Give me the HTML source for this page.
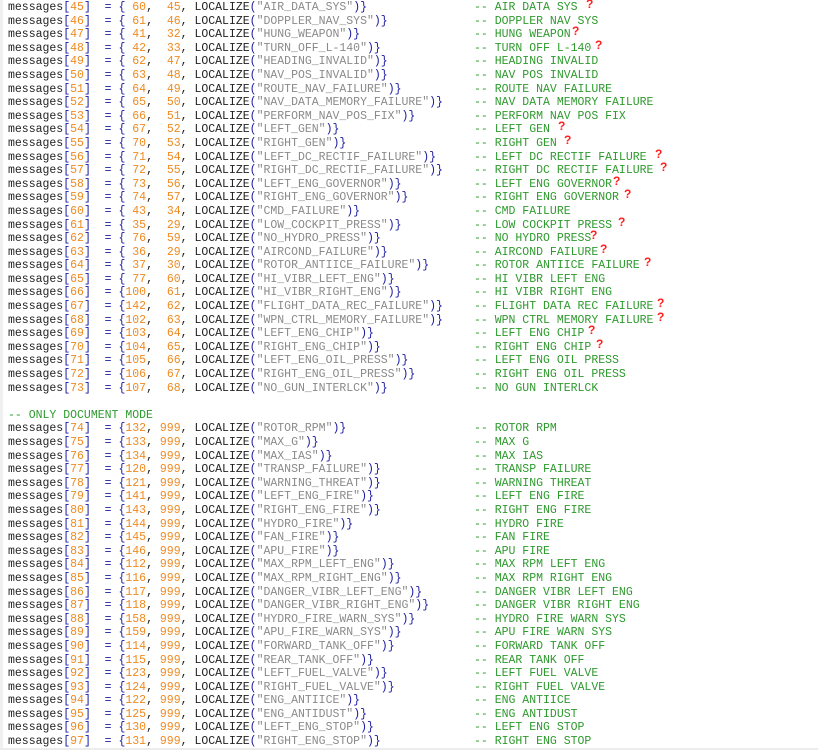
<!DOCTYPE html>
<html><head><meta charset="utf-8"><style>
body{margin:0;background:#fff;width:818px;height:750px;overflow:hidden;position:relative}
#lb{position:absolute;left:0;top:0;width:3px;height:750px;background:#f0f0f0}
#bb{position:absolute;left:0;top:748px;width:818px;height:2px;background:#ececec}
#w{position:absolute;left:8px;top:1px;font-family:"Liberation Mono",monospace;font-size:11.5px;color:#222}
.l{position:relative;height:13.6px;line-height:13.6px;white-space:pre}
b{font-weight:normal;color:#222}
i{font-style:normal;color:#1a1aa0}
o{color:#f08a20}
s{text-decoration:none;color:#8a8a8a}
c{position:absolute;left:466px;top:0;color:#2e9a2e}
q{quotes:none;position:absolute;top:-3px;color:#ff2020;font-family:"Liberation Sans",sans-serif;font-weight:bold;font-size:12px}
q::before,q::after{content:none}
</style></head><body><div id="lb"></div><div id="bb"></div><div id="w"><div class=l><b>messages</b><i>[</i><o>45</o><i>]</i>  <i>= {</i> <o>60</o>,  <o>45</o>, <b>LOCALIZE</b><i>(</i><s>"AIR_DATA_SYS"</s><i>)}</i><c>-- AIR DATA SYS</c><q style="left:578px">?</q></div><div class=l><b>messages</b><i>[</i><o>46</o><i>]</i>  <i>= {</i> <o>61</o>,  <o>46</o>, <b>LOCALIZE</b><i>(</i><s>"DOPPLER_NAV_SYS"</s><i>)}</i><c>-- DOPPLER NAV SYS</c></div><div class=l><b>messages</b><i>[</i><o>47</o><i>]</i>  <i>= {</i> <o>41</o>,  <o>32</o>, <b>LOCALIZE</b><i>(</i><s>"HUNG_WEAPON"</s><i>)}</i><c>-- HUNG WEAPON</c><q style="left:564px">?</q></div><div class=l><b>messages</b><i>[</i><o>48</o><i>]</i>  <i>= {</i> <o>42</o>,  <o>33</o>, <b>LOCALIZE</b><i>(</i><s>"TURN_OFF_L-140"</s><i>)}</i><c>-- TURN OFF L-140</c><q style="left:587px">?</q></div><div class=l><b>messages</b><i>[</i><o>49</o><i>]</i>  <i>= {</i> <o>62</o>,  <o>47</o>, <b>LOCALIZE</b><i>(</i><s>"HEADING_INVALID"</s><i>)}</i><c>-- HEADING INVALID</c></div><div class=l><b>messages</b><i>[</i><o>50</o><i>]</i>  <i>= {</i> <o>63</o>,  <o>48</o>, <b>LOCALIZE</b><i>(</i><s>"NAV_POS_INVALID"</s><i>)}</i><c>-- NAV POS INVALID</c></div><div class=l><b>messages</b><i>[</i><o>51</o><i>]</i>  <i>= {</i> <o>64</o>,  <o>49</o>, <b>LOCALIZE</b><i>(</i><s>"ROUTE_NAV_FAILURE"</s><i>)}</i><c>-- ROUTE NAV FAILURE</c></div><div class=l><b>messages</b><i>[</i><o>52</o><i>]</i>  <i>= {</i> <o>65</o>,  <o>50</o>, <b>LOCALIZE</b><i>(</i><s>"NAV_DATA_MEMORY_FAILURE"</s><i>)}</i><c>-- NAV DATA MEMORY FAILURE</c></div><div class=l><b>messages</b><i>[</i><o>53</o><i>]</i>  <i>= {</i> <o>66</o>,  <o>51</o>, <b>LOCALIZE</b><i>(</i><s>"PERFORM_NAV_POS_FIX"</s><i>)}</i><c>-- PERFORM NAV POS FIX</c></div><div class=l><b>messages</b><i>[</i><o>54</o><i>]</i>  <i>= {</i> <o>67</o>,  <o>52</o>, <b>LOCALIZE</b><i>(</i><s>"LEFT_GEN"</s><i>)}</i><c>-- LEFT GEN</c><q style="left:550px">?</q></div><div class=l><b>messages</b><i>[</i><o>55</o><i>]</i>  <i>= {</i> <o>70</o>,  <o>53</o>, <b>LOCALIZE</b><i>(</i><s>"RIGHT_GEN"</s><i>)}</i><c>-- RIGHT GEN</c><q style="left:556px">?</q></div><div class=l><b>messages</b><i>[</i><o>56</o><i>]</i>  <i>= {</i> <o>71</o>,  <o>54</o>, <b>LOCALIZE</b><i>(</i><s>"LEFT_DC_RECTIF_FAILURE"</s><i>)}</i><c>-- LEFT DC RECTIF FAILURE</c><q style="left:647px">?</q></div><div class=l><b>messages</b><i>[</i><o>57</o><i>]</i>  <i>= {</i> <o>72</o>,  <o>55</o>, <b>LOCALIZE</b><i>(</i><s>"RIGHT_DC_RECTIF_FAILURE"</s><i>)}</i><c>-- RIGHT DC RECTIF FAILURE</c><q style="left:652px">?</q></div><div class=l><b>messages</b><i>[</i><o>58</o><i>]</i>  <i>= {</i> <o>73</o>,  <o>56</o>, <b>LOCALIZE</b><i>(</i><s>"LEFT_ENG_GOVERNOR"</s><i>)}</i><c>-- LEFT ENG GOVERNOR</c><q style="left:605px">?</q></div><div class=l><b>messages</b><i>[</i><o>59</o><i>]</i>  <i>= {</i> <o>74</o>,  <o>57</o>, <b>LOCALIZE</b><i>(</i><s>"RIGHT_ENG_GOVERNOR"</s><i>)}</i><c>-- RIGHT ENG GOVERNOR</c><q style="left:616px">?</q></div><div class=l><b>messages</b><i>[</i><o>60</o><i>]</i>  <i>= {</i> <o>43</o>,  <o>34</o>, <b>LOCALIZE</b><i>(</i><s>"CMD_FAILURE"</s><i>)}</i><c>-- CMD FAILURE</c></div><div class=l><b>messages</b><i>[</i><o>61</o><i>]</i>  <i>= {</i> <o>35</o>,  <o>29</o>, <b>LOCALIZE</b><i>(</i><s>"LOW_COCKPIT_PRESS"</s><i>)}</i><c>-- LOW COCKPIT PRESS</c><q style="left:610px">?</q></div><div class=l><b>messages</b><i>[</i><o>62</o><i>]</i>  <i>= {</i> <o>76</o>,  <o>59</o>, <b>LOCALIZE</b><i>(</i><s>"NO_HYDRO_PRESS"</s><i>)}</i><c>-- NO HYDRO PRESS</c><q style="left:582px">?</q></div><div class=l><b>messages</b><i>[</i><o>63</o><i>]</i>  <i>= {</i> <o>36</o>,  <o>29</o>, <b>LOCALIZE</b><i>(</i><s>"AIRCOND_FAILURE"</s><i>)}</i><c>-- AIRCOND FAILURE</c><q style="left:592px">?</q></div><div class=l><b>messages</b><i>[</i><o>64</o><i>]</i>  <i>= {</i> <o>37</o>,  <o>30</o>, <b>LOCALIZE</b><i>(</i><s>"ROTOR_ANTIICE_FAILURE"</s><i>)}</i><c>-- ROTOR ANTIICE FAILURE</c><q style="left:636px">?</q></div><div class=l><b>messages</b><i>[</i><o>65</o><i>]</i>  <i>= {</i> <o>77</o>,  <o>60</o>, <b>LOCALIZE</b><i>(</i><s>"HI_VIBR_LEFT_ENG"</s><i>)}</i><c>-- HI VIBR LEFT ENG</c></div><div class=l><b>messages</b><i>[</i><o>66</o><i>]</i>  <i>= {</i><o>100</o>,  <o>61</o>, <b>LOCALIZE</b><i>(</i><s>"HI_VIBR_RIGHT_ENG"</s><i>)}</i><c>-- HI VIBR RIGHT ENG</c></div><div class=l><b>messages</b><i>[</i><o>67</o><i>]</i>  <i>= {</i><o>142</o>,  <o>62</o>, <b>LOCALIZE</b><i>(</i><s>"FLIGHT_DATA_REC_FAILURE"</s><i>)}</i><c>-- FLIGHT DATA REC FAILURE</c><q style="left:649px">?</q></div><div class=l><b>messages</b><i>[</i><o>68</o><i>]</i>  <i>= {</i><o>102</o>,  <o>63</o>, <b>LOCALIZE</b><i>(</i><s>"WPN_CTRL_MEMORY_FAILURE"</s><i>)}</i><c>-- WPN CTRL MEMORY FAILURE</c><q style="left:649px">?</q></div><div class=l><b>messages</b><i>[</i><o>69</o><i>]</i>  <i>= {</i><o>103</o>,  <o>64</o>, <b>LOCALIZE</b><i>(</i><s>"LEFT_ENG_CHIP"</s><i>)}</i><c>-- LEFT ENG CHIP</c><q style="left:580px">?</q></div><div class=l><b>messages</b><i>[</i><o>70</o><i>]</i>  <i>= {</i><o>104</o>,  <o>65</o>, <b>LOCALIZE</b><i>(</i><s>"RIGHT_ENG_CHIP"</s><i>)}</i><c>-- RIGHT ENG CHIP</c><q style="left:588px">?</q></div><div class=l><b>messages</b><i>[</i><o>71</o><i>]</i>  <i>= {</i><o>105</o>,  <o>66</o>, <b>LOCALIZE</b><i>(</i><s>"LEFT_ENG_OIL_PRESS"</s><i>)}</i><c>-- LEFT ENG OIL PRESS</c></div><div class=l><b>messages</b><i>[</i><o>72</o><i>]</i>  <i>= {</i><o>106</o>,  <o>67</o>, <b>LOCALIZE</b><i>(</i><s>"RIGHT_ENG_OIL_PRESS"</s><i>)}</i><c>-- RIGHT ENG OIL PRESS</c></div><div class=l><b>messages</b><i>[</i><o>73</o><i>]</i>  <i>= {</i><o>107</o>,  <o>68</o>, <b>LOCALIZE</b><i>(</i><s>"NO_GUN_INTERLCK"</s><i>)}</i><c>-- NO GUN INTERLCK</c></div><div class=l> </div><div class=l><span style="color:#2e9a2e">-- ONLY DOCUMENT MODE</span></div><div class=l><b>messages</b><i>[</i><o>74</o><i>]</i>  <i>= {</i><o>132</o>, <o>999</o>, <b>LOCALIZE</b><i>(</i><s>"ROTOR_RPM"</s><i>)}</i><c>-- ROTOR RPM</c></div><div class=l><b>messages</b><i>[</i><o>75</o><i>]</i>  <i>= {</i><o>133</o>, <o>999</o>, <b>LOCALIZE</b><i>(</i><s>"MAX_G"</s><i>)}</i><c>-- MAX G</c></div><div class=l><b>messages</b><i>[</i><o>76</o><i>]</i>  <i>= {</i><o>134</o>, <o>999</o>, <b>LOCALIZE</b><i>(</i><s>"MAX_IAS"</s><i>)}</i><c>-- MAX IAS</c></div><div class=l><b>messages</b><i>[</i><o>77</o><i>]</i>  <i>= {</i><o>120</o>, <o>999</o>, <b>LOCALIZE</b><i>(</i><s>"TRANSP_FAILURE"</s><i>)}</i><c>-- TRANSP FAILURE</c></div><div class=l><b>messages</b><i>[</i><o>78</o><i>]</i>  <i>= {</i><o>121</o>, <o>999</o>, <b>LOCALIZE</b><i>(</i><s>"WARNING_THREAT"</s><i>)}</i><c>-- WARNING THREAT</c></div><div class=l><b>messages</b><i>[</i><o>79</o><i>]</i>  <i>= {</i><o>141</o>, <o>999</o>, <b>LOCALIZE</b><i>(</i><s>"LEFT_ENG_FIRE"</s><i>)}</i><c>-- LEFT ENG FIRE</c></div><div class=l><b>messages</b><i>[</i><o>80</o><i>]</i>  <i>= {</i><o>143</o>, <o>999</o>, <b>LOCALIZE</b><i>(</i><s>"RIGHT_ENG_FIRE"</s><i>)}</i><c>-- RIGHT ENG FIRE</c></div><div class=l><b>messages</b><i>[</i><o>81</o><i>]</i>  <i>= {</i><o>144</o>, <o>999</o>, <b>LOCALIZE</b><i>(</i><s>"HYDRO_FIRE"</s><i>)}</i><c>-- HYDRO FIRE</c></div><div class=l><b>messages</b><i>[</i><o>82</o><i>]</i>  <i>= {</i><o>145</o>, <o>999</o>, <b>LOCALIZE</b><i>(</i><s>"FAN_FIRE"</s><i>)}</i><c>-- FAN FIRE</c></div><div class=l><b>messages</b><i>[</i><o>83</o><i>]</i>  <i>= {</i><o>146</o>, <o>999</o>, <b>LOCALIZE</b><i>(</i><s>"APU_FIRE"</s><i>)}</i><c>-- APU FIRE</c></div><div class=l><b>messages</b><i>[</i><o>84</o><i>]</i>  <i>= {</i><o>112</o>, <o>999</o>, <b>LOCALIZE</b><i>(</i><s>"MAX_RPM_LEFT_ENG"</s><i>)}</i><c>-- MAX RPM LEFT ENG</c></div><div class=l><b>messages</b><i>[</i><o>85</o><i>]</i>  <i>= {</i><o>116</o>, <o>999</o>, <b>LOCALIZE</b><i>(</i><s>"MAX_RPM_RIGHT_ENG"</s><i>)}</i><c>-- MAX RPM RIGHT ENG</c></div><div class=l><b>messages</b><i>[</i><o>86</o><i>]</i>  <i>= {</i><o>117</o>, <o>999</o>, <b>LOCALIZE</b><i>(</i><s>"DANGER_VIBR_LEFT_ENG"</s><i>)}</i><c>-- DANGER VIBR LEFT ENG</c></div><div class=l><b>messages</b><i>[</i><o>87</o><i>]</i>  <i>= {</i><o>118</o>, <o>999</o>, <b>LOCALIZE</b><i>(</i><s>"DANGER_VIBR_RIGHT_ENG"</s><i>)}</i><c>-- DANGER VIBR RIGHT ENG</c></div><div class=l><b>messages</b><i>[</i><o>88</o><i>]</i>  <i>= {</i><o>158</o>, <o>999</o>, <b>LOCALIZE</b><i>(</i><s>"HYDRO_FIRE_WARN_SYS"</s><i>)}</i><c>-- HYDRO FIRE WARN SYS</c></div><div class=l><b>messages</b><i>[</i><o>89</o><i>]</i>  <i>= {</i><o>159</o>, <o>999</o>, <b>LOCALIZE</b><i>(</i><s>"APU_FIRE_WARN_SYS"</s><i>)}</i><c>-- APU FIRE WARN SYS</c></div><div class=l><b>messages</b><i>[</i><o>90</o><i>]</i>  <i>= {</i><o>114</o>, <o>999</o>, <b>LOCALIZE</b><i>(</i><s>"FORWARD_TANK_OFF"</s><i>)}</i><c>-- FORWARD TANK OFF</c></div><div class=l><b>messages</b><i>[</i><o>91</o><i>]</i>  <i>= {</i><o>115</o>, <o>999</o>, <b>LOCALIZE</b><i>(</i><s>"REAR_TANK_OFF"</s><i>)}</i><c>-- REAR TANK OFF</c></div><div class=l><b>messages</b><i>[</i><o>92</o><i>]</i>  <i>= {</i><o>123</o>, <o>999</o>, <b>LOCALIZE</b><i>(</i><s>"LEFT_FUEL_VALVE"</s><i>)}</i><c>-- LEFT FUEL VALVE</c></div><div class=l><b>messages</b><i>[</i><o>93</o><i>]</i>  <i>= {</i><o>124</o>, <o>999</o>, <b>LOCALIZE</b><i>(</i><s>"RIGHT_FUEL_VALVE"</s><i>)}</i><c>-- RIGHT FUEL VALVE</c></div><div class=l><b>messages</b><i>[</i><o>94</o><i>]</i>  <i>= {</i><o>122</o>, <o>999</o>, <b>LOCALIZE</b><i>(</i><s>"ENG_ANTIICE"</s><i>)}</i><c>-- ENG ANTIICE</c></div><div class=l><b>messages</b><i>[</i><o>95</o><i>]</i>  <i>= {</i><o>125</o>, <o>999</o>, <b>LOCALIZE</b><i>(</i><s>"ENG_ANTIDUST"</s><i>)}</i><c>-- ENG ANTIDUST</c></div><div class=l><b>messages</b><i>[</i><o>96</o><i>]</i>  <i>= {</i><o>130</o>, <o>999</o>, <b>LOCALIZE</b><i>(</i><s>"LEFT_ENG_STOP"</s><i>)}</i><c>-- LEFT ENG STOP</c></div><div class=l><b>messages</b><i>[</i><o>97</o><i>]</i>  <i>= {</i><o>131</o>, <o>999</o>, <b>LOCALIZE</b><i>(</i><s>"RIGHT_ENG_STOP"</s><i>)}</i><c>-- RIGHT ENG STOP</c></div></div></body></html>
